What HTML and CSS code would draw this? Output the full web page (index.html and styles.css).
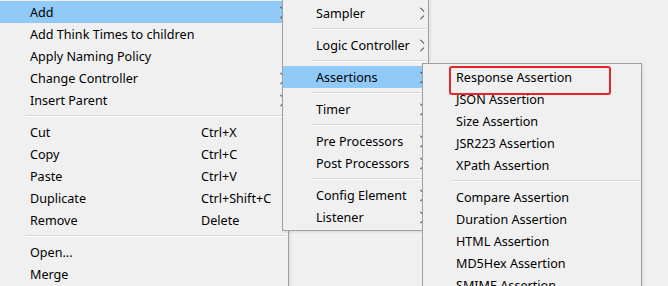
FILE: index.html
```html
<!DOCTYPE html>
<html lang="en">
<head>
  <meta charset="UTF-8">
  <title>Add menu</title>
  <link rel="stylesheet" href="styles.css">
</head>
<body>
  <div class="desk">

    <!-- main popup menu -->
    <div class="menu main-menu">
      <div class="item hover"><span class="label">Add</span><span class="arrow"></span></div>
      <div class="item"><span class="label">Add Think Times to children</span></div>
      <div class="item"><span class="label">Apply Naming Policy</span></div>
      <div class="item"><span class="label">Change Controller</span><span class="arrow"></span></div>
      <div class="item"><span class="label">Insert Parent</span><span class="arrow"></span></div>
      <div class="sep"></div>
      <div class="item"><span class="label">Cut</span><span class="key">Ctrl+X</span></div>
      <div class="item"><span class="label">Copy</span><span class="key">Ctrl+C</span></div>
      <div class="item"><span class="label">Paste</span><span class="key">Ctrl+V</span></div>
      <div class="item"><span class="label">Duplicate</span><span class="key">Ctrl+Shift+C</span></div>
      <div class="item"><span class="label">Remove</span><span class="key">Delete</span></div>
      <div class="sep"></div>
      <div class="item"><span class="label">Open...</span></div>
      <div class="item"><span class="label">Merge</span></div>
    </div>

    <!-- Add submenu -->
    <div class="menu add-menu">
      <div class="item"><span class="label">Sampler</span><span class="arrow"></span></div>
      <div class="sep"></div>
      <div class="item"><span class="label">Logic Controller</span><span class="arrow"></span></div>
      <div class="sep"></div>
      <div class="item hover"><span class="label">Assertions</span><span class="arrow"></span></div>
      <div class="sep"></div>
      <div class="item"><span class="label">Timer</span><span class="arrow"></span></div>
      <div class="sep"></div>
      <div class="item"><span class="label">Pre Processors</span><span class="arrow"></span></div>
      <div class="item"><span class="label">Post Processors</span><span class="arrow"></span></div>
      <div class="sep"></div>
      <div class="item"><span class="label">Config Element</span><span class="arrow"></span></div>
      <div class="item"><span class="label">Listener</span><span class="arrow"></span></div>
    </div>

    <!-- Assertions submenu -->
    <div class="menu assert-menu">
      <div class="item marked"><span class="label">Response Assertion</span></div>
      <div class="item"><span class="label">JSON Assertion</span></div>
      <div class="item"><span class="label">Size Assertion</span></div>
      <div class="item"><span class="label">JSR223 Assertion</span></div>
      <div class="item"><span class="label">XPath Assertion</span></div>
      <div class="sep"></div>
      <div class="item"><span class="label">Compare Assertion</span></div>
      <div class="item"><span class="label">Duration Assertion</span></div>
      <div class="item"><span class="label">HTML Assertion</span></div>
      <div class="item"><span class="label">MD5Hex Assertion</span></div>
      <div class="item"><span class="label">SMIME Assertion</span></div>
    </div>

  </div>
</body>
</html>
```

FILE: styles.css
```css
* {
  box-sizing: border-box;
}
body {
  margin: 0;
  background: #f0f0f0;
  font-family: 'Noto Sans', 'Liberation Sans', sans-serif;
  font-size: 12.6px;
  color: #000;
  overflow: hidden;
}
.desk {
  position: relative;
  width: 668px;
  height: 286px;
  overflow: hidden;
}

/* popup menus sit on top of each other like windows */
.menu {
  position: absolute;
  background: #f0f0f0;
  border: 1px solid #a0a0a0;
  padding: 2px 0;
  box-shadow: 2px 2px 2px rgba(0,0,0,0.06);
}
.main-menu {
  left: -1px;
  top: -2px;
  width: 290px;
  --pad: 30px;
}
.add-menu {
  left: 282px;
  top: -1px;
  width: 147px;
  --pad: 33px;
}
.assert-menu {
  left: 422px;
  top: 63px;
  width: 220px;
  --pad: 33px;
}

.item {
  position: relative;
  display: flex;
  align-items: center;
  height: 22px;
  padding-left: var(--pad);
  white-space: nowrap;
}
.item.hover {
  background: #91c9f7;
}
.label {
  width: 171px;
}

/* submenu chevron */
.arrow {
  position: absolute;
  right: 5px;
  top: 8px;
  width: 4px;
  height: 7px;
}
.arrow::before,
.arrow::after {
  content: "";
  position: absolute;
  right: -1px;
  width: 5px;
  height: 1px;
  background: #444;
}
.arrow::before {
  top: 1px;
  transform: rotate(45deg);
  transform-origin: right center;
}
.arrow::after {
  bottom: 1px;
  transform: rotate(-45deg);
  transform-origin: right center;
}

.sep {
  height: 10px;
  margin-left: calc(var(--pad) - 4px);
  margin-right: 2px;
  position: relative;
}
.sep::before {
  content: "";
  position: absolute;
  left: 0;
  right: 0;
  top: 4px;
  height: 1px;
  background: #d7d7d7;
  border-bottom: 1px solid #fff;
  box-sizing: content-box;
}

/* the red box that marks Response Assertion */
.marked::after {
  content: "";
  position: absolute;
  left: 26px;
  top: 0;
  width: 158px;
  height: 25px;
  border: 2px solid #e3262b;
  border-radius: 3px;
}
```
